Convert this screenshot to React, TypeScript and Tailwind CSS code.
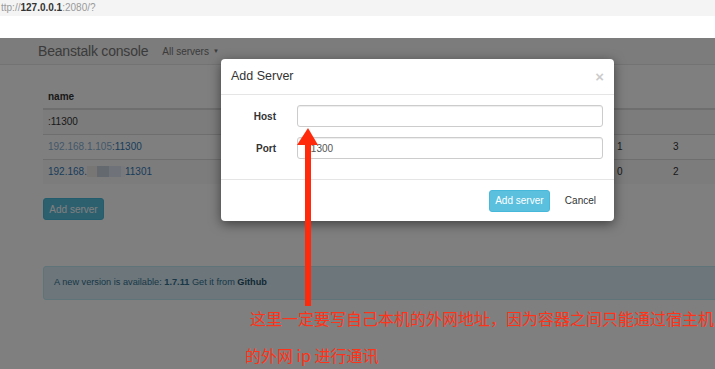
import React from 'react';

const rows = [
  { name: ':11300', a: '', b: '', link: false },
  { name: '192.168.1.105:11300', a: '1', b: '3', link: true },
  { name: '', a: '0', b: '2', link: true, masked: true },
];

const App: React.FC = () => {
  return (
    <div className="relative w-[715px] h-[369px] overflow-hidden bg-white font-['Liberation_Sans','Helvetica',sans-serif] text-[#333]">
      {/* Browser address bar (left edge of the url is cropped in the shot) */}
      <div className="h-[16px] bg-[#f4f4f4] flex items-center pl-[1px] text-[10px] leading-none text-[#9a9a9a]">
        <span>ttp://</span>
        <span className="text-[#333] font-semibold">127.0.0.1</span>
        <span>:2080/?</span>
      </div>
      <div className="h-[22px] bg-white" />

      {/* Page behind the dialog */}
      <div className="relative h-[331px]">
        <div className="h-[27px] bg-[#f8f8f8] border-b border-[#e7e7e7] flex items-center pl-[38px]">
          <span className="text-[14px] text-[#777] tracking-[-0.2px]">Beanstalk console</span>
          <span className="ml-[14px] text-[10px] text-[#777] flex items-center gap-[4px] pt-[1px]">
            All servers
            <span className="text-[6px]">▼</span>
          </span>
        </div>

        <div className="pl-[43px] pt-[19px]">
          <table className="w-[720px] border-collapse text-[10px]">
            <thead>
              <tr className="h-[25px] border-b-2 border-[#ddd]">
                <th className="w-[569px] text-left font-bold px-[5px]">name</th>
                <th className="w-[56px]" />
                <th className="w-[56px]" />
                <th />
              </tr>
            </thead>
            <tbody>
              {rows.map((r, i) => (
                <tr key={i} className={`h-[25px] border-t border-[#ddd] ${i % 2 === 0 ? 'bg-[#f9f9f9]' : ''}`}>
                  <td className="px-[5px]">
                    {r.masked ? (
                      <span className="flex items-center text-[#337ab7]">
                        192.168.
                        <span className="inline-block w-[10px] h-[11px] bg-[#f1ede8]" />
                        <span className="inline-block w-[12px] h-[11px] bg-[#c9d3e0]" />
                        <span className="inline-block w-[12px] h-[11px] bg-[#dfe7f2]" />
                        <span className="inline-block w-[4px] h-[11px] bg-[#eef2f8]" />
                        11301
                      </span>
                    ) : r.link ? (
                      <span className="text-[#337ab7]">
                        <span className="opacity-60">192.168.1.105</span>:11300
                      </span>
                    ) : (
                      r.name
                    )}
                  </td>
                  <td className="px-[5px]">{r.a}</td>
                  <td className="px-[5px]">{r.b}</td>
                  <td />
                </tr>
              ))}
            </tbody>
          </table>

          <button className="mt-[14px] w-[61px] h-[22px] rounded-[3px] bg-[#5bc0de] border border-[#46b8da] text-white text-[10px]">
            Add server
          </button>

          <div className="mt-[46px] w-[700px] h-[34px] rounded-[3px] bg-[#d9edf7] border border-[#bce8f1] text-[#31708f] text-[9.2px] flex items-center pl-[10px]">
            A new version is available:&nbsp;<b>1.7.11</b>&nbsp;Get it from&nbsp;<b className="text-[#245269]">Github</b>
          </div>
        </div>

        {/* Backdrop */}
        <div className="absolute inset-0 bg-black/50" />

        {/* Add Server dialog */}
        <div className="absolute left-[221px] top-[21px] w-[393px] bg-white rounded-[4px] shadow-[0_3px_12px_rgba(0,0,0,0.5)]">
          <div className="h-[36px] border-b border-[#e5e5e5] flex items-center justify-between pl-[10px] pr-[10px]">
            <span className="text-[12.5px] text-[#333]">Add Server</span>
            <span className="text-[15px] font-bold text-black opacity-20 leading-none">×</span>
          </div>
          <div className="pt-[10px] pb-[20px] pl-[10px] pr-[11px] grid grid-cols-[45px_1fr] gap-x-[21px] gap-y-[10px] items-center text-[10px]">
            <label className="text-right font-bold">Host</label>
            <div className="h-[22px] border border-[#ccc] rounded-[3px] shadow-[inset_0_1px_1px_rgba(0,0,0,0.075)]" />
            <label className="text-right font-bold">Port</label>
            <div className="h-[22px] border border-[#ccc] rounded-[3px] shadow-[inset_0_1px_1px_rgba(0,0,0,0.075)] flex items-center pl-[8px] text-[#555]">
              11300
            </div>
          </div>
          <div className="h-[42px] border-t border-[#e5e5e5] flex items-center justify-end pr-[10px] text-[10px]">
            <button className="w-[61px] h-[22px] rounded-[3px] bg-[#5bc0de] border border-[#46b8da] text-white">
              Add server
            </button>
            <button className="ml-[7px] px-[8px] h-[22px] text-[#333]">Cancel</button>
          </div>
        </div>
      </div>

      {/* Red annotation arrow */}
      <svg className="absolute left-[296px] top-[127px]" width="24" height="182" viewBox="0 0 24 182">
        <polygon points="12,1 1,18 22,18" fill="#ff2a0c" />
        <rect x="9" y="16" width="6" height="163" fill="#ff2a0c" />
      </svg>

      {/* Red annotation text */}
      <div className="absolute left-[250px] top-[307px] text-[16px] leading-[22px] text-[#ff3319] font-['Noto_Sans_CJK_SC',sans-serif] whitespace-nowrap">
        这里一定要写自己本机的外网地址，因为容器之间只能通过宿主机
      </div>
      <div className="absolute left-[245px] top-[344px] text-[16px] leading-[22px] text-[#ff3319] font-['Noto_Sans_CJK_SC',sans-serif] whitespace-nowrap">
        的外网 ip 进行通讯
      </div>
    </div>
  );
};

export default App;
